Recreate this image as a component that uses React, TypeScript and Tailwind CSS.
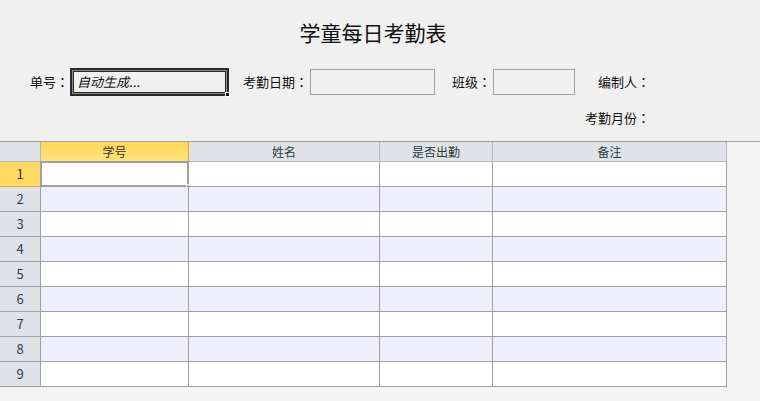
import React from "react";

const font = { fontFamily: '"Noto Sans CJK SC", "Microsoft YaHei", sans-serif' };

const columns = ["学号", "姓名", "是否出勤", "备注"];
const rows = [1, 2, 3, 4, 5, 6, 7, 8, 9];

// 全角冒号居中显示
function Colon() {
  return <span className="font-['Noto_Sans_CJK_TC']">：</span>;
}

function Field({ label, width, className = "" }: { label: string; width: string; className?: string }) {
  return (
    <div className={`flex items-center ${className}`}>
      <span className="text-[13px] text-[#111] whitespace-nowrap">
        {label}
        <Colon />
      </span>
      <div className={`${width} h-[26px] ml-[2px] border border-[#a0a0a0]`}></div>
    </div>
  );
}

function App() {
  return (
    <div className="w-[760px] h-[401px] bg-[#f3f3f3] overflow-hidden" style={font}>
      {/* 表头区域 */}
      <div className="h-[142px] bg-[#f0f0f0] border-b border-[#a0a0a0]">
        <div className="pt-[18px] text-center text-[21px] leading-[28px] text-[#111] pr-[14px]">学童每日考勤表</div>
        <div className="flex items-center mt-[22px] h-[28px]">
          <div className="flex items-center ml-[30px]">
            <span className="text-[13px] text-[#111] whitespace-nowrap">
              单号
              <Colon />
            </span>
            <div className="relative ml-[1px] w-[159px] h-[28px] border-2 border-[#2a2a2a] shadow-[inset_0_0_0_1px_#8a8a8a]">
              <div className="absolute inset-[1px] border border-[#2a2a2a] flex items-center pl-[3px] text-[13px] italic text-[#111]">
                自动生成...
              </div>
              <div className="absolute -right-[3px] -bottom-[3px] w-[5px] h-[5px] bg-[#111] border border-white"></div>
            </div>
          </div>
          <Field label="考勤日期" width="w-[125px]" className="ml-[14px]" />
          <Field label="班级" width="w-[82px]" className="ml-[17px]" />
          <span className="ml-[23px] text-[13px] text-[#111]">
            编制人
            <Colon />
          </span>
        </div>
        <div className="pl-[585px] mt-[12px] text-[13px] leading-[20px] text-[#111]">
          考勤月份
          <Colon />
        </div>
      </div>

      {/* 表格 */}
      <div className="grid grid-cols-[41px_148px_191px_113px_234px] w-[727px] text-[12px]">
        <div className="h-[20px] bg-[#dfe2e6] border-r border-b border-[#b4b8bc]"></div>
        {columns.map((c, i) => (
          <div
            key={c}
            className={`h-[20px] flex items-center justify-center border-r border-b ${
              i === 0
                ? "bg-gradient-to-b from-[#ffd75a] to-[#ffe47c] border-[#e0a53c] text-[#3b3020]"
                : "bg-[#dfe2e6] border-[#b4b8bc] text-[#1f3d3a]"
            }`}
          >
            {c}
          </div>
        ))}
        {rows.map((r) => (
          <React.Fragment key={r}>
            <div
              className={`h-[25px] flex items-center justify-center text-[13px] border-r border-b ${
                r === 1
                  ? "bg-[#ffd962] border-[#e0a53c] text-[#3b3020]"
                  : "bg-[#dfe2e6] border-[#a0a0a0] text-[#2c3e50]"
              }`}
            >
              {r}
            </div>
            {columns.map((c, i) => (
              <div
                key={c}
                className={`relative h-[25px] border-r border-b border-[#a0a0a0] ${r % 2 === 0 ? "bg-[#eeeefc]" : "bg-white"}`}
              >
                {r === 1 && i === 0 && (
                  <div className="absolute -left-px -top-px -right-[2px] -bottom-[2px] border-[2px] border-r-[3px] border-b-[3px] border-[#a0a0a0]">
                    <div className="absolute -right-[5px] -bottom-[5px] w-[6px] h-[6px] bg-[#a0a0a0] border border-white"></div>
                  </div>
                )}
              </div>
            ))}
          </React.Fragment>
        ))}
      </div>
    </div>
  );
}

export default App;
